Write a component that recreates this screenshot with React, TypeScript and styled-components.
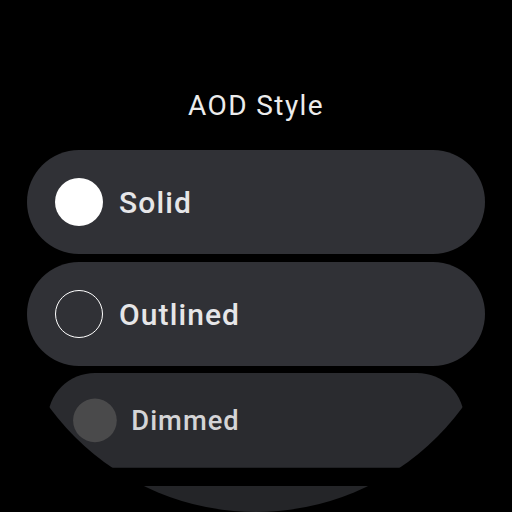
import React from "react";
import styled, { createGlobalStyle } from "styled-components";

const Global = createGlobalStyle`
  html, body {
    margin: 0;
    padding: 0;
    background: #000;
  }
`;

const Screen = styled.div`
  width: 512px;
  height: 512px;
  background: #000;
  border-radius: 50%;
  overflow: hidden;
  display: flex;
  flex-direction: column;
  align-items: stretch;
  padding: 0 27px;
  box-sizing: border-box;
  font-family: Roboto, "Noto Sans", sans-serif;
`;

const Title = styled.div`
  margin-top: 88px;
  height: 36px;
  line-height: 36px;
  text-align: center;
  font-size: 28px;
  letter-spacing: 1.4px;
  color: #ececec;
  margin-bottom: 26px;
`;

const List = styled.div`
  display: flex;
  flex-direction: column;
  gap: 8px;
`;

const Chip = styled.div<{ $scale?: number; $bg: string; $pull?: number }>`
  flex-shrink: 0;
  height: 104px;
  border-radius: 52px;
  background: ${(p) => p.$bg};
  display: flex;
  align-items: center;
  padding: 0 28px;
  gap: 16px;
  transform: scale(${(p) => p.$scale ?? 1});
  transform-origin: top center;
  margin-top: ${(p) => p.$pull ?? 0}px;
`;

const Radio = styled.div<{ $kind: "solid" | "outline" | "dim" }>`
  width: 48px;
  height: 48px;
  border-radius: 50%;
  box-sizing: border-box;
  flex-shrink: 0;
  background: ${(p) =>
    p.$kind === "solid" ? "#ffffff" : p.$kind === "dim" ? "#4a4a4b" : "transparent"};
  border: ${(p) => (p.$kind === "outline" ? "1.5px solid #ffffff" : "none")};
`;

const Label = styled.span<{ $dim?: boolean }>`
  font-size: 30px;
  line-height: 36px;
  margin-top: 1px;
  letter-spacing: 1.1px;
  font-weight: 500;
  color: ${(p) => (p.$dim ? "#d4d4d6" : "#e6e6e8")};
`;

export default function App() {
  return (
    <>
      <Global />
      <Screen>
        <Title>AOD Style</Title>
        <List>
          <Chip $bg="#303136">
            <Radio $kind="solid" />
            <Label>Solid</Label>
          </Chip>
          <Chip $bg="#303136">
            <Radio $kind="outline" />
            <Label>Outlined</Label>
          </Chip>
          <Chip $bg="#2a2b2f" $scale={0.91} $pull={-1}>
            <Radio $kind="dim" />
            <Label $dim>Dimmed</Label>
          </Chip>
          <Chip $bg="#242528" $scale={0.8} $pull={1} />
        </List>
      </Screen>
    </>
  );
}
